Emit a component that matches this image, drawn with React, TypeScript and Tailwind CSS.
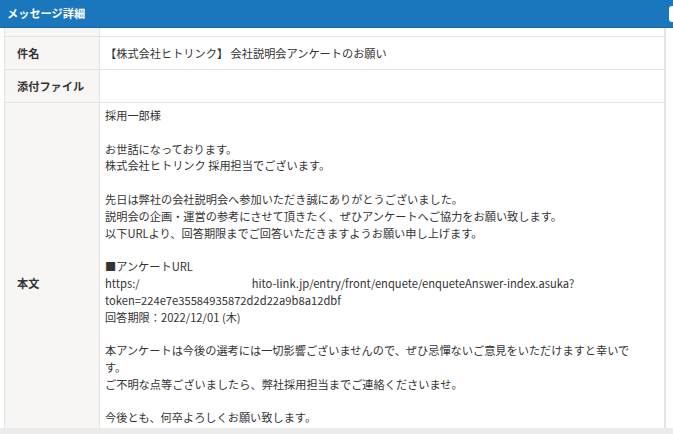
import React from "react";

const font = { fontFamily: '"Noto Sans CJK JP", "Noto Sans", sans-serif' };

export default function App() {
  const body: string[] = [
    "採用一郎様",
    "",
    "お世話になっております。",
    "株式会社ヒトリンク 採用担当でございます。",
    "",
    "先日は弊社の会社説明会へ参加いただき誠にありがとうございました。",
    "説明会の企画・運営の参考にさせて頂きたく、ぜひアンケートへご協力をお願い致します。",
    "以下URLより、回答期限までご回答いただきますようお願い申し上げます。",
    "",
    "■アンケートURL",
  ];
  const body2: string[] = [
    "token=224e7e35584935872d2d22a9b8a12dbf",
    "回答期限：2022/12/01 (木)",
    "",
    "本アンケートは今後の選考には一切影響ございませんので、ぜひ忌憚ないご意見をいただけますと幸いで",
    "す。",
    "ご不明な点等ございましたら、弊社採用担当までご連絡くださいませ。",
    "",
    "今後とも、何卒よろしくお願い致します。",
  ];
  const line = (t: string, i: number) => (
    <div key={i} className="h-[16.8px] whitespace-nowrap">
      {t === "" ? "\u00a0" : t}
    </div>
  );
  return (
    <div
      className="w-[673px] h-[434px] overflow-hidden bg-white flex flex-col text-[11.2px] leading-[16.8px] text-[#333]"
      style={font}
    >
      <div className="h-[28px] shrink-0 bg-[#1a77bd] border-b border-[#1668a6] flex items-center pl-[7px] pr-0">
        <span className="text-white font-bold text-[11.2px]">メッセージ詳細</span>
        <div className="ml-auto w-[6px] h-[16px] rounded-l-[3px] bg-white mr-[-2px]" />
      </div>
      <div className="flex-1 overflow-hidden pl-[4px]">
        <div className="w-[662px] border-l border-r-2 border-[#e4e4e4]">
          <div className="grid grid-cols-[95px_1fr] h-[9px] border-b border-[#e4e4e4]">
            <div className="bg-[#f7f6f5] border-r border-[#e4e4e4]" />
            <div />
          </div>
          <div className="grid grid-cols-[95px_1fr] h-[33px] border-b border-[#e4e4e4]">
            <div className="bg-[#f7f6f5] border-r border-[#e4e4e4] flex items-center pl-[12px] font-bold">件名</div>
            <div className="flex items-center pl-[5px]">【株式会社ヒトリンク】 会社説明会アンケートのお願い</div>
          </div>
          <div className="grid grid-cols-[95px_1fr] h-[33px] border-b border-[#e4e4e4]">
            <div className="bg-[#f7f6f5] border-r border-[#e4e4e4] flex items-center pl-[12px] font-bold">添付ファイル</div>
            <div />
          </div>
          <div className="grid grid-cols-[95px_1fr] border-b border-[#e4e4e4]">
            <div className="bg-[#f7f6f5] border-r border-[#e4e4e4] flex items-center pl-[12px] font-bold">本文</div>
            <div className="pl-[5px] pt-[4px] pb-[38px]">
              {body.map(line)}
              <div className="h-[16.8px] whitespace-nowrap flex">
                <span>https:/</span>
                <span className="inline-block w-[112px]" />
                <span>hito-link.jp/entry/front/enquete/enqueteAnswer-index.asuka?</span>
              </div>
              {body2.map((t, i) => line(t, i + 100))}
            </div>
          </div>
        </div>
      </div>
      <div className="h-[6px] shrink-0 bg-[#ebebeb]" />
    </div>
  );
}
